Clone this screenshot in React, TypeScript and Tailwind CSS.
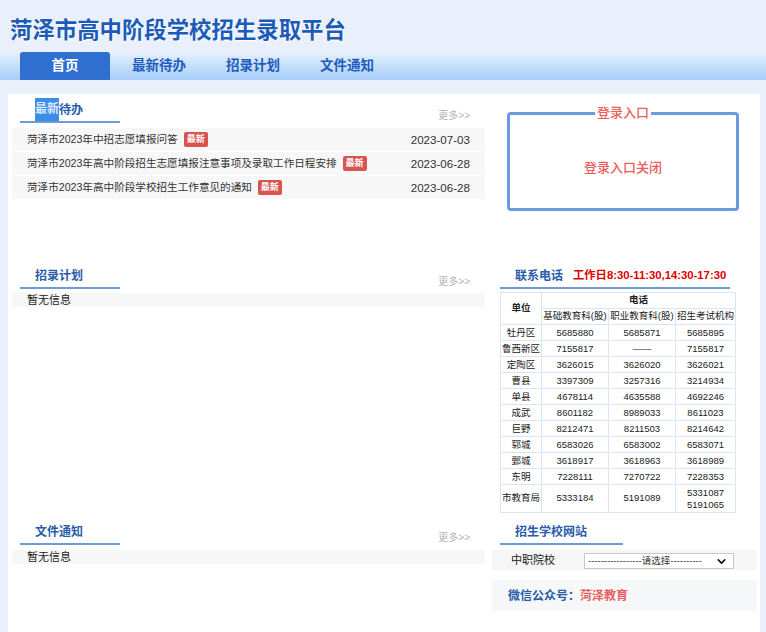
import { ChevronDown } from "lucide-react";

const NAV = ["首页", "最新待办", "招录计划", "文件通知"];

const TODOS = [
  { title: "菏泽市2023年中招志愿填报问答", date: "2023-07-03" },
  { title: "菏泽市2023年高中阶段招生志愿填报注意事项及录取工作日程安排", date: "2023-06-28" },
  { title: "菏泽市2023年高中阶段学校招生工作意见的通知", date: "2023-06-28" },
];

const PHONES: [string, string, string, string][] = [
  ["牡丹区", "5685880", "5685871", "5685895"],
  ["鲁西新区", "7155817", "——", "7155817"],
  ["定陶区", "3626015", "3626020", "3626021"],
  ["曹县", "3397309", "3257316", "3214934"],
  ["单县", "4678114", "4635588", "4692246"],
  ["成武", "8601182", "8989033", "8611023"],
  ["巨野", "8212471", "8211503", "8214642"],
  ["郓城", "6583026", "6583002", "6583071"],
  ["鄄城", "3618917", "3618963", "3618989"],
  ["东明", "7228111", "7270722", "7228353"],
];

function SectionHead({ title, width = "w-[100px]", more = false, extra }: { title: React.ReactNode; width?: string; more?: boolean; extra?: React.ReactNode }) {
  return (
    <div className="relative">
      <div className="mt-[4px] h-[23px] flex items-center pl-[23px] text-[12px] font-bold text-[#2a5caa]">
        {title}
        {extra}
      </div>
      <div className={`ml-[8px] h-[2px] bg-[#6e9ad6] ${width}`} />
      {more && (
        <span className="absolute right-[15px] top-[10px] text-[10px] text-[#b4b4b4]">更多&gt;&gt;</span>
      )}
    </div>
  );
}

export default function App() {
  return (
    <div className="w-[766px] h-[632px] overflow-hidden bg-[#e9f0fb] font-['Liberation_Sans','Noto_Sans_CJK_SC',sans-serif] text-[#333]">
      {/* Title */}
      <div className="h-[52px] flex items-center pl-[10px] pt-[5px]">
        <h1 className="text-[22.4px] font-bold text-[#1c5cb8] font-['Noto_Sans_CJK_SC',sans-serif] [text-shadow:0_0_2px_#fff,1px_1px_2px_#fff]">
          菏泽市高中阶段学校招生录取平台
        </h1>
      </div>

      {/* Nav */}
      <div className="h-[28px] bg-gradient-to-b from-[#e6f0fc] to-[#a5cef8] flex pl-[20px] gap-[4px]">
        {NAV.map((n, i) => (
          <div
            key={n}
            className={`w-[90px] flex items-center justify-center text-[13.5px] font-bold rounded-t-[3px] ${
              i === 0 ? "bg-[#2f6fd0] text-white" : "text-[#1f5dbd]"
            }`}
          >
            {n}
          </div>
        ))}
      </div>

      {/* Content */}
      <div className="mt-[14px] ml-[8px] w-[752px] h-[538px] bg-white flex">
        {/* Left column */}
        <div className="w-[473px] ml-[4px] flex flex-col">
          <div className="h-[166px]">
            <SectionHead
              more
              title={
                <>
                  <span className="bg-[#3a8ee8] text-[#dbe9ff] leading-[23px]">最新</span>
                  待办
                </>
              }
            />
            <div className="mt-[5px] bg-[#f7f7f7]">
              {TODOS.map((t) => (
                <div key={t.title} className="h-[24px] flex items-center pl-[15px] pr-[15px] border-b border-[#fbfbfb] text-[10.6px]">
                  <span className="text-[#333]">{t.title}</span>
                  <span className="ml-[6px] px-[3px] h-[15px] leading-[15px] bg-[#d9534f] text-white text-[9px] font-bold rounded-[2px]">最新</span>
                  <span className="ml-auto text-[11.6px] text-[#333]">{t.date}</span>
                </div>
              ))}
            </div>
          </div>

          <div className="h-[256px]">
            <SectionHead title="招录计划" more />
            <div className="mt-[4px] h-[14px] bg-[#f7f7f7] pl-[15px] text-[11px] leading-[14px] text-[#222]">暂无信息</div>
          </div>

          <div>
            <SectionHead title="文件通知" more />
            <div className="mt-[5px] h-[14px] bg-[#f7f7f7] pl-[15px] text-[11px] leading-[14px] text-[#222]">暂无信息</div>
          </div>
        </div>

        {/* Right column */}
        <div className="w-[265px] ml-[7px] flex flex-col">
          <div className="h-[166px] pt-[12px]">
            <fieldset className="ml-[15px] w-[232px] h-[105px] border-[3px] border-[#6a9be0] rounded-[4px] flex items-center justify-center">
              <legend className="mx-auto px-[2px] text-[13px] leading-[14px] font-medium text-[#e85d5d]">登录入口</legend>
              <div className="text-[13px] font-medium text-[#e85d5d] mt-[8px]">登录入口关闭</div>
            </fieldset>
          </div>

          <div className="h-[256px]">
            <SectionHead
              title="联系电话"
              width="w-[230px]"
              extra={<span className="ml-[10px] text-[11.3px] text-[#e00000]">工作日8:30-11:30,14:30-17:30</span>}
            />
            <table className="mt-[3px] ml-[8px] w-[235px] border-collapse text-[9.5px] text-center text-[#222] table-fixed">
              <colgroup>
                <col className="w-[41px]" />
                <col className="w-[67px]" />
                <col className="w-[67px]" />
                <col className="w-[60px]" />
              </colgroup>
              <tbody>
                <tr className="h-[16px]">
                  <td rowSpan={2} className="border border-[#dbe5f1] font-bold">单位</td>
                  <td colSpan={3} className="border border-[#dbe5f1] font-bold">电话</td>
                </tr>
                <tr className="h-[16px]">
                  <td className="border border-[#dbe5f1] p-0 whitespace-nowrap">基础教育科(股)</td>
                  <td className="border border-[#dbe5f1] p-0 whitespace-nowrap">职业教育科(股)</td>
                  <td className="border border-[#dbe5f1] p-0 whitespace-nowrap">招生考试机构</td>
                </tr>
                {PHONES.map((r) => (
                  <tr key={r[0]} className="h-[16px]">
                    {r.map((c, i) => (
                      <td key={i} className="border border-[#dbe5f1] p-0 whitespace-nowrap leading-[15px]">{c}</td>
                    ))}
                  </tr>
                ))}
                <tr className="h-[28px]">
                  <td className="border border-[#dbe5f1] p-0 whitespace-nowrap">市教育局</td>
                  <td className="border border-[#dbe5f1] p-0">5333184</td>
                  <td className="border border-[#dbe5f1] p-0">5191089</td>
                  <td className="border border-[#dbe5f1] p-0 leading-[12px]">
                    5331087
                    <br />
                    5191065
                  </td>
                </tr>
              </tbody>
            </table>
          </div>

          <div>
            <SectionHead title="招生学校网站" width="w-[123px]" />
            <div className="mt-[5px] h-[20px] bg-[#f6f6f6] flex items-center pl-[19px]">
              <span className="w-[73px] text-[11px] text-[#222]">中职院校</span>
              <div className="w-[150px] h-[16px] mt-[2px] border border-[#c8c8c8] bg-white flex items-center pl-[3px] text-[9.5px] text-[#333]">
                <span className="whitespace-nowrap">-----------------请选择----------</span>
                <ChevronDown size={13} strokeWidth={3} className="ml-auto mr-[5px] text-[#111]" />
              </div>
            </div>
            <div className="mt-[10px] h-[31px] bg-[#f6f7f9] flex items-center pl-[16px] text-[12px] font-bold">
              <span className="text-[#2a5caa]">微信公众号：</span>
              <span className="text-[#e85d5d]">菏泽教育</span>
            </div>
          </div>
        </div>
      </div>
    </div>
  );
}
